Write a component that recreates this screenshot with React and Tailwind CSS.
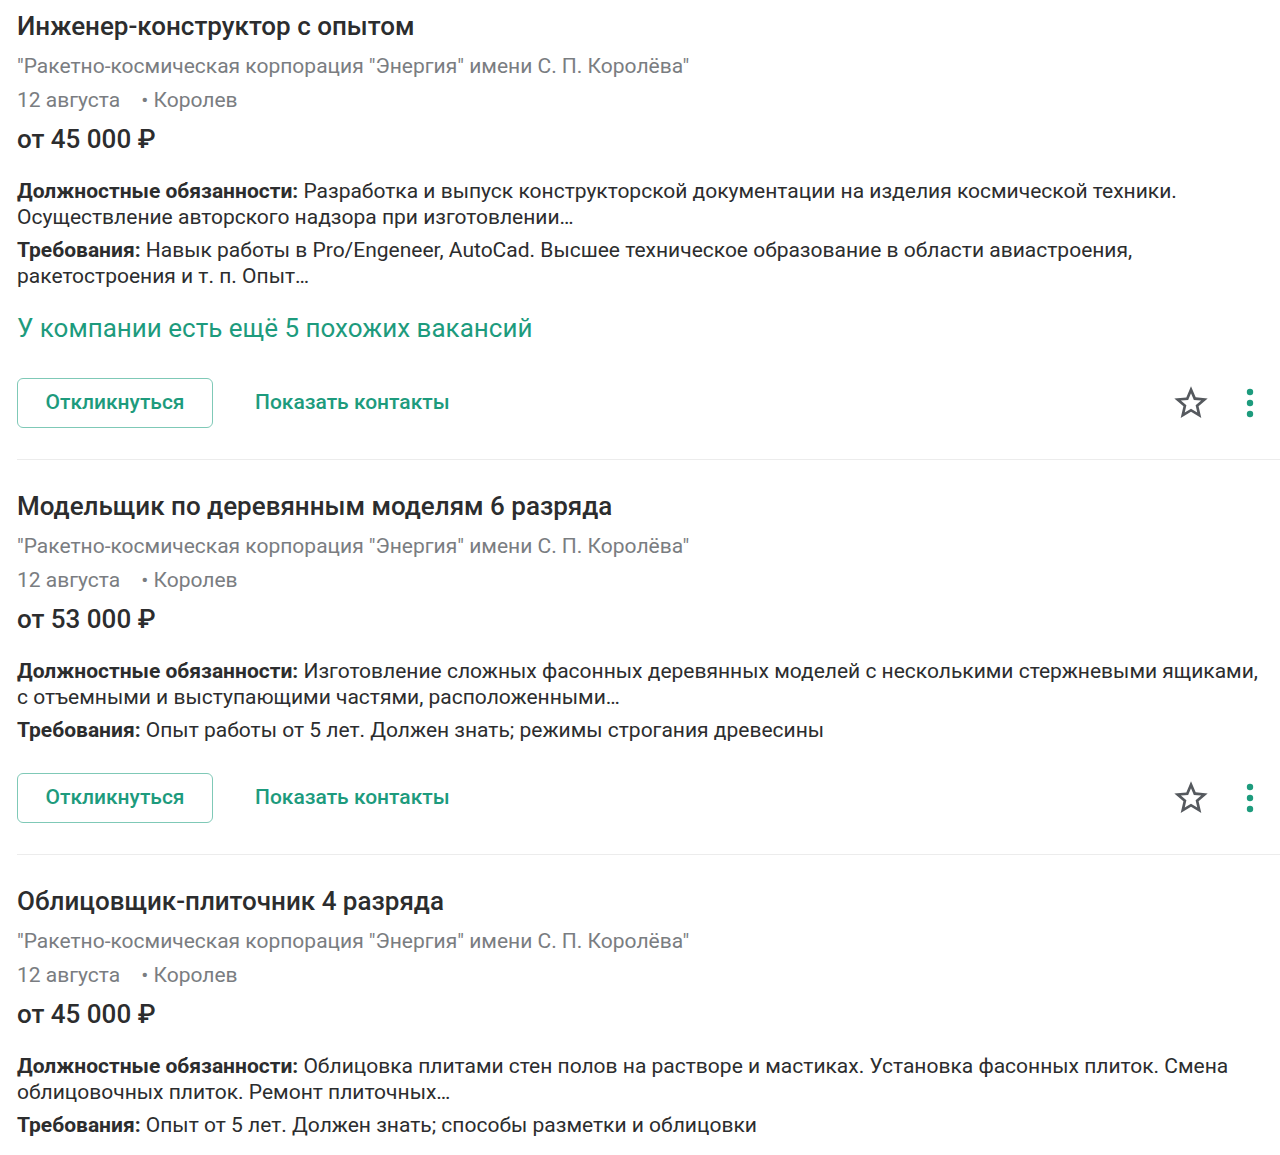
import React from 'react';

const vacancies = [
    {
        title: 'Инженер-конструктор с опытом',
        salary: 'от 45 000 ₽',
        duties: 'Разработка и выпуск конструкторской документации на изделия космической техники. Осуществление авторского надзора при изготовлении…',
        reqs: 'Навык работы в Pro/Engeneer, AutoCad. Высшее техническое образование в области авиастроения, ракетостроения и т. п. Опыт…',
        similar: 'У компании есть ещё 5 похожих вакансий',
    },
    {
        title: 'Модельщик по деревянным моделям 6 разряда',
        salary: 'от 53 000 ₽',
        duties: 'Изготовление сложных фасонных деревянных моделей с несколькими стержневыми ящиками, с отъемными и выступающими частями, расположенными…',
        reqs: 'Опыт работы от 5 лет. Должен знать; режимы строгания древесины',
    },
    {
        title: 'Облицовщик-плиточник 4 разряда',
        salary: 'от 45 000 ₽',
        duties: 'Облицовка плитами стен полов на растворе и мастиках. Установка фасонных плиток. Смена облицовочных плиток. Ремонт плиточных…',
        reqs: 'Опыт от 5 лет. Должен знать; способы разметки и облицовки',
        last: true,
    },
];

const StarIcon = () => (
    <svg width="40" height="40" viewBox="0 0 24 24" fill="#55595e">
        <path d="M22 9.24l-7.19-.62L12 2 9.19 8.63 2 9.24l5.46 4.73L5.82 21 12 17.27 18.18 21l-1.63-7.03L22 9.24zM12 15.4l-3.76 2.27 1-4.28-3.32-2.88 4.38-.38L12 6.1l1.71 4.04 4.38.38-3.32 2.88 1 4.28L12 15.4z" />
    </svg>
);

const MoreIcon = () => (
    <svg width="12" height="34" viewBox="0 0 12 34" fill="#1d9b7d">
        <circle cx="6" cy="6" r="3.2" />
        <circle cx="6" cy="17" r="3.2" />
        <circle cx="6" cy="28" r="3.2" />
    </svg>
);

const VacancyCard = ({ v, first }) => (
    <div className={`${first ? 'pt-[10px]' : 'pt-[30px]'} ${v.last ? 'pb-6' : 'pb-[31px] border-b border-[#ececec]'}`}>
        {/* Header */}
        <h2 className="text-[26px] leading-[32px] font-medium text-[#2c2d2e]">{v.title}</h2>
        <div className="mt-[10px] text-[21px] leading-[28px] text-[#7a7d81]">
            "Ракетно-космическая корпорация "Энергия" имени С. П. Королёва"
        </div>
        <div className="mt-[6px] flex text-[21px] leading-[28px] text-[#7a7d81]">
            <span>12 августа</span>
            <span className="ml-[21px]">• Королев</span>
        </div>
        <div className="mt-[9px] text-[26px] leading-[32px] font-medium text-[#2c2d2e]">{v.salary}</div>

        {/* Description */}
        <p className="mt-[23px] pr-[10px] text-[21px] leading-[26px] text-[#2c2d2e]">
            <b className="font-bold">Должностные обязанности:</b> {v.duties}
        </p>
        <p className="mt-[7px] pr-[10px] text-[21px] leading-[26px] text-[#2c2d2e]">
            <b className="font-bold">Требования:</b> {v.reqs}
        </p>
        {v.similar && (
            <div className="mt-[23px] text-[26px] leading-[32px] text-[#1d9b7d]">{v.similar}</div>
        )}

        {/* Actions */}
        {!v.last && (
            <div className={`${v.similar ? 'mt-[34px]' : 'mt-[30px]'} flex items-center`}>
                <button className="w-[196px] h-[50px] rounded-md border border-[#7fc9b7] text-[21px] font-medium text-[#1d9b7d]">
                    Откликнуться
                </button>
                <button className="ml-[42px] text-[21px] font-medium text-[#1d9b7d]">Показать контакты</button>
                <div className="ml-auto flex items-center">
                    <StarIcon />
                    <div className="ml-[33px] mr-[24px]">
                        <MoreIcon />
                    </div>
                </div>
            </div>
        )}
    </div>
);

export default function App() {
    return (
        <div className="w-[1280px] min-h-[1155px] bg-white pl-[17px]" style={{ fontFamily: 'Roboto, sans-serif' }}>
            {vacancies.map((v, i) => (
                <VacancyCard key={i} v={v} first={i === 0} />
            ))}
        </div>
    );
}
